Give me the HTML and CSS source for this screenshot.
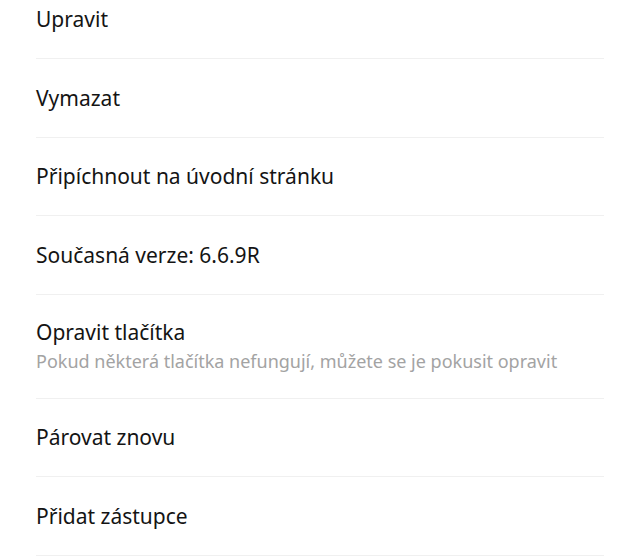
FILE: index.html
```html
<!DOCTYPE html>
<html lang="cs">
<head>
<meta charset="utf-8">
<link rel="stylesheet" href="styles.css">
</head>
<body>
<ul class="list">
  <li class="row"><span class="title">Upravit</span></li>
  <li class="row"><span class="title">Vymazat</span></li>
  <li class="row"><span class="title">Připíchnout na úvodní stránku</span></li>
  <li class="row"><span class="title">Současná verze: 6.6.9R</span></li>
  <li class="row row-tall"><span class="title">Opravit tlačítka</span><span class="sub">Pokud některá tlačítka nefungují, můžete se je pokusit opravit</span></li>
  <li class="row"><span class="title">Párovat znovu</span></li>
  <li class="row"><span class="title">Přidat zástupce</span></li>
</ul>
</body>
</html>
```
FILE: styles.css
```css
html, body {
  margin: 0;
  padding: 0;
  background: #ffffff;
}
body {
  font-family: "Noto Sans", "Open Sans", sans-serif;
  overflow: hidden;
}
.list {
  list-style: none;
  margin: -19.5px 36px 0 36px;
  padding: 0;
}
.row {
  box-sizing: border-box;
  height: 78.5px;
  border-bottom: 1px solid #f0f0f0;
  display: flex;
  flex-direction: column;
  justify-content: center;
}
.row-tall {
  height: 104px;
}
.title {
  font-size: 21px;
  line-height: 28px;
  font-weight: 400;
  color: #141414;
}
.sub {
  font-size: 18px;
  line-height: 26px;
  font-weight: 400;
  color: #a3a3a3;
  margin-top: 2px;
}
```
